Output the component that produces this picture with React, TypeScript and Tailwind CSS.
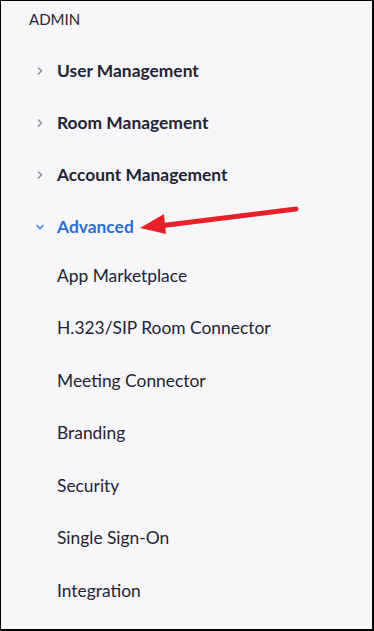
import React from "react";

const font = { fontFamily: "Lato, 'Open Sans', sans-serif" };

function ChevronRight() {
  return (
    <svg width="8" height="10" viewBox="0 0 8 10" className="shrink-0">
      <path d="M2 1.5 L5.5 5 L2 8.5" fill="none" stroke="#8a8a94" strokeWidth="1.4" />
    </svg>
  );
}

function ChevronDown() {
  return (
    <svg width="10" height="8" viewBox="0 0 10 8" className="shrink-0">
      <path d="M1.5 2 L5 5.5 L8.5 2" fill="none" stroke="#3b8be0" strokeWidth="1.6" />
    </svg>
  );
}

const mainItems = ["User Management", "Room Management", "Account Management"];
const subItems = [
  "App Marketplace",
  "H.323/SIP Room Connector",
  "Meeting Connector",
  "Branding",
  "Security",
  "Single Sign-On",
  "Integration",
];

export default function App() {
  return (
    <div
      className="relative w-[374px] h-[631px] bg-[#f7f7fa] border-t border-l border-r-2 border-b-2 border-black overflow-hidden"
      style={font}
    >
      <div className="pl-[28px] pt-[9px] h-[44px] text-[15px] text-[#232333] leading-[18px]">ADMIN</div>
      {mainItems.map((t) => (
        <div key={t} className="h-[52px] flex items-center">
          <div className="w-[56px] pl-[35px] flex items-center">
            <ChevronRight />
          </div>
          <span className="text-[17.4px] font-bold text-[#232333] leading-none">{t}</span>
        </div>
      ))}
      <div className="h-[48px] pt-1 flex items-center">
        <div className="w-[56px] pl-[34px] flex items-center">
          <ChevronDown />
        </div>
        <span className="text-[17.4px] font-bold text-[#2d6cd6] leading-none">Advanced</span>
      </div>
      {subItems.map((t) => (
        <div key={t} className="h-[52.5px] flex items-center pl-[56px]">
          <span className="text-[17.4px] text-[#232333] leading-none">{t}</span>
        </div>
      ))}
      <svg className="absolute left-0 top-0 pointer-events-none" width="374" height="631">
        <line x1="295" y1="208" x2="158" y2="225" stroke="#e8202a" strokeWidth="5" strokeLinecap="round" />
        <polygon points="139,227 163,213 165,233" fill="#e8202a" />
      </svg>
    </div>
  );
}
